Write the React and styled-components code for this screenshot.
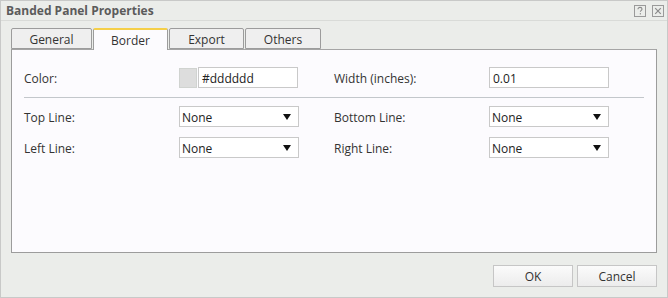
import styled, { createGlobalStyle } from 'styled-components';

const GlobalStyle = createGlobalStyle`
  html, body {
    margin: 0;
    padding: 0;
    background: #ffffff;
  }
  * {
    box-sizing: border-box;
  }
`;

const tabs = ['General', 'Border', 'Export', 'Others'];
const tabWidths = [81, 75, 75, 76];

function HelpIcon() {
  return (
    <svg width="12" height="12" viewBox="0 0 12 12">
      <rect x="0.5" y="0.5" width="11" height="11" fill="none" stroke="#9a9a9a" />
      <path d="M4 4.2c0-1.2.9-1.8 2-1.8s2 .6 2 1.6c0 1.3-1.6 1.4-1.6 2.8" fill="none" stroke="#8a8a8a" strokeWidth="1.1" />
      <rect x="5.8" y="8.2" width="1.2" height="1.2" fill="#8a8a8a" />
    </svg>
  );
}

function CloseIcon() {
  return (
    <svg width="12" height="12" viewBox="0 0 12 12">
      <rect x="0.5" y="0.5" width="11" height="11" fill="none" stroke="#9a9a9a" />
      <path d="M3.2 3.2l5.6 5.6M8.8 3.2l-5.6 5.6" stroke="#8a8a8a" strokeWidth="1.2" />
    </svg>
  );
}

function Select({ value }) {
  return (
    <SelectBox>
      <span>{value}</span>
      <svg width="8" height="6" viewBox="0 0 8 6">
        <path d="M0 0h8L4 6z" fill="#111111" />
      </svg>
    </SelectBox>
  );
}

function App() {
  return (
    <>
      <GlobalStyle />
      <Dialog>
        <TitleBar>
          <Title>Banded Panel Properties</Title>
          <TitleIcons>
            <HelpIcon />
            <CloseIcon />
          </TitleIcons>
        </TitleBar>
        <Body>
          <TabRow>
            {tabs.map((t, i) => (
              <Tab key={t} $active={t === 'Border'} style={{ width: tabWidths[i] }}>
                {t}
              </Tab>
            ))}
          </TabRow>
          <Panel>
            <FormGrid>
              <Label>Color:</Label>
              <ColorField>
                <Swatch />
                <TextInput $width={100}>#dddddd</TextInput>
              </ColorField>
              <Label>Width (inches):</Label>
              <TextInput $width={120}>0.01</TextInput>
            </FormGrid>
            <Divider />
            <FormGrid>
              <Label>Top Line:</Label>
              <Select value="None" />
              <Label>Bottom Line:</Label>
              <Select value="None" />
              <Label>Left Line:</Label>
              <Select value="None" />
              <Label>Right Line:</Label>
              <Select value="None" />
            </FormGrid>
          </Panel>
          <Footer>
            <Button>OK</Button>
            <Button>Cancel</Button>
          </Footer>
        </Body>
      </Dialog>
    </>
  );
}

const Dialog = styled.div`
  width: 668px;
  height: 298px;
  border: 1px solid #c8c9c8;
  background: #ebedea;
  font-family: "Open Sans", "Liberation Sans", sans-serif;
  font-size: 12px;
  color: #333333;
  display: flex;
  flex-direction: column;
`;

const TitleBar = styled.div`
  height: 20px;
  border-bottom: 1px solid #d9dbd8;
  display: flex;
  align-items: center;
  justify-content: space-between;
  padding: 0 3px 0 5px;
`;

const Title = styled.div`
  font-weight: bold;
  color: #5b5b5b;
  font-size: 12px;
`;

const TitleIcons = styled.div`
  display: flex;
  gap: 6px;
  align-items: center;
  margin-top: 1px;
`;

const Body = styled.div`
  padding: 7px 10px 0 10px;
  display: flex;
  flex-direction: column;
`;

const TabRow = styled.div`
  display: flex;
  gap: 1px;
  height: 21px;
  position: relative;
  z-index: 1;
`;

const Tab = styled.div`
  height: ${(p) => (p.$active ? '22px' : '21px')};
  display: flex;
  align-items: center;
  justify-content: center;
  padding-top: 1px;
  border: 1px solid #9c9c9c;
  border-bottom: ${(p) => (p.$active ? 'none' : '1px solid #9c9c9c')};
  border-top: ${(p) => (p.$active ? '2px solid #f5cf48' : '1px solid #9c9c9c')};
  border-radius: 2px 2px 0 0;
  background: ${(p) => (p.$active ? '#fcfbfe' : '#efefef')};
  color: #333333;
`;

const Panel = styled.div`
  width: 646px;
  height: 204px;
  border: 1px solid #9c9c9c;
  border-top-color: #a5a5a5;
  background: #fcfbfe;
  padding: 17px 12px 0 12px;
`;

const FormGrid = styled.div`
  display: grid;
  grid-template-columns: 155px 155px 155px 120px;
  row-gap: 10px;
  align-items: center;
`;

const Label = styled.div`
  color: #333333;
  padding-top: 1px;
`;

const ColorField = styled.div`
  display: flex;
  gap: 1px;
  align-items: center;
`;

const Swatch = styled.div`
  width: 18px;
  height: 20px;
  background: #dddddd;
  border: 1px solid #d0d3d0;
`;

const TextInput = styled.div`
  width: ${(p) => p.$width}px;
  height: 21px;
  border: 1px solid #c9c9c9;
  background: #ffffff;
  padding: 1px 0 0 3px;
  display: flex;
  align-items: center;
  color: #222222;
`;

const Divider = styled.div`
  height: 1px;
  background: #c3c7cb;
  margin: 9px 0 8px 0;
`;

const SelectBox = styled.div`
  width: 120px;
  height: 21px;
  border: 1px solid #c9c9c9;
  background: #ffffff;
  display: flex;
  align-items: center;
  justify-content: space-between;
  padding: 1px 7px 0 2px;
  color: #222222;
`;

const Footer = styled.div`
  display: flex;
  justify-content: flex-end;
  gap: 4px;
  margin-top: 12px;
  width: 646px;
`;

const Button = styled.div`
  width: 80px;
  height: 22px;
  border: 1px solid #c6c6c6;
  background: linear-gradient(#fbfbfb, #ececec);
  display: flex;
  align-items: center;
  justify-content: center;
  padding-top: 1px;
  color: #333333;
`;

export default App;
